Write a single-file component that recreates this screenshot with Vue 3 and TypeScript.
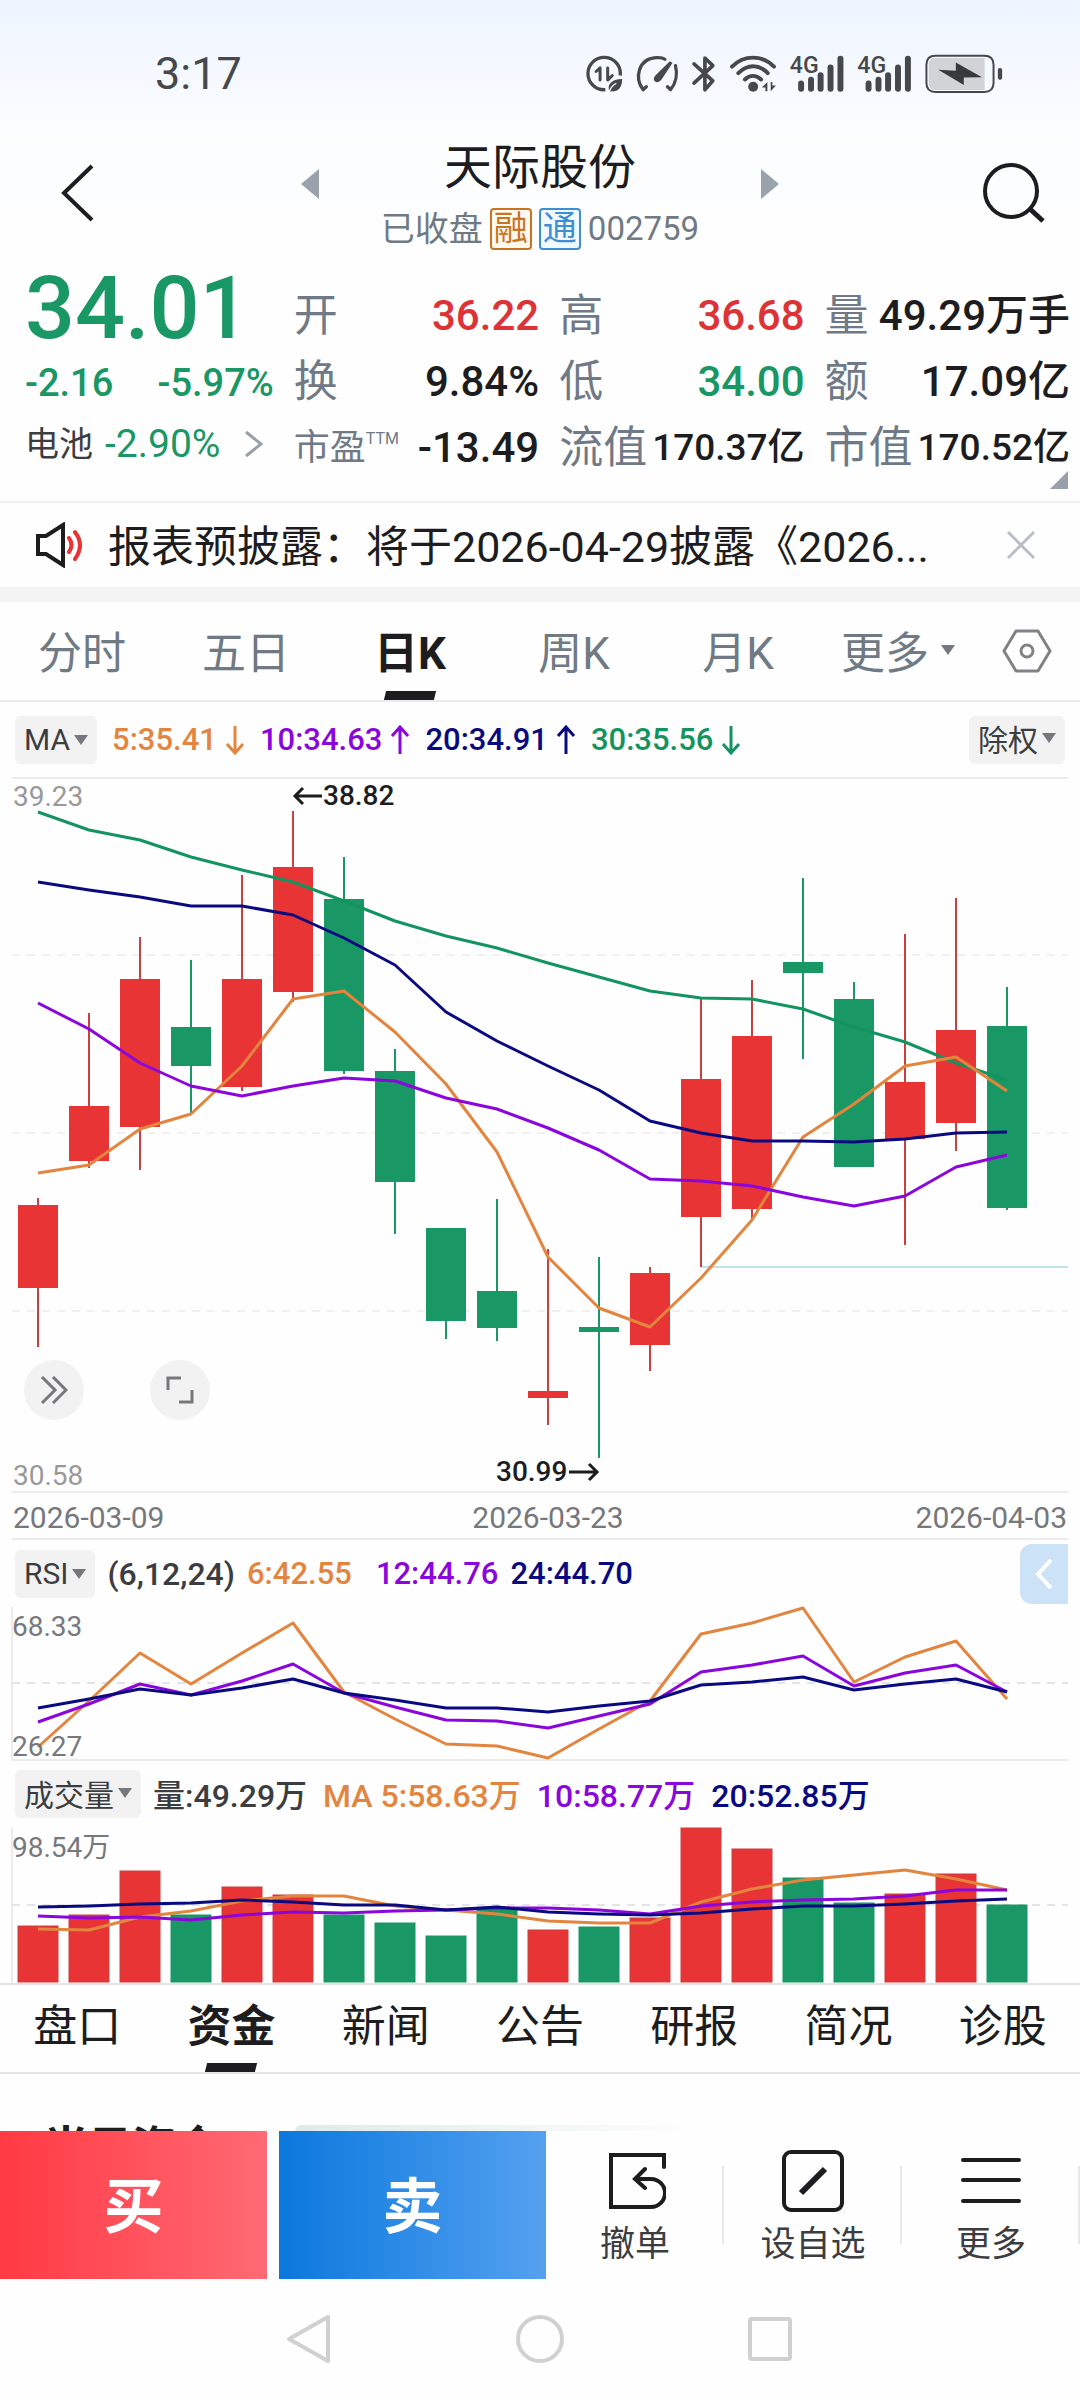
<script setup lang="ts">
import { ref } from 'vue'

interface Candle {
  up: boolean
  high: number
  top: number
  bottom: number
  low: number
}

interface Stat {
  label: string
  note?: string
  value: string
  tone?: string
  compact?: boolean
}

const stats: Stat[] = [
  { label: '开', value: '36.22', tone: 'up' },
  { label: '高', value: '36.68', tone: 'up' },
  { label: '量', value: '49.29万手' },
  { label: '换', value: '9.84%' },
  { label: '低', value: '34.00', tone: 'down' },
  { label: '额', value: '17.09亿' },
  { label: '市盈', note: 'TTM', value: '-13.49' },
  { label: '流值', value: '170.37亿', compact: true },
  { label: '市值', value: '170.52亿', compact: true },
]

const periods = ['分时', '五日', '日K', '周K', '月K']
const activePeriod = ref('日K')

const sections = ['盘口', '资金', '新闻', '公告', '研报', '简况', '诊股']
const activeSection = ref('资金')

const step = 51
const firstX = 38
const x = (i: number): number => firstX + i * step

const rows: [number, number, number, number, number][] = [
  [1, 418, 425, 508, 567],
  [1, 233, 326, 381, 388],
  [1, 157, 199, 347, 390],
  [0, 180, 247, 286, 333],
  [1, 95, 199, 307, 311],
  [1, 31, 87, 212, 222],
  [0, 77, 119, 291, 294],
  [0, 269, 291, 402, 454],
  [0, 448, 448, 541, 559],
  [0, 419, 511, 548, 561],
  [1, 469, 611, 618, 645],
  [0, 477, 547, 552, 678],
  [1, 487, 493, 565, 591],
  [1, 218, 299, 437, 487],
  [1, 200, 256, 429, 439],
  [0, 98, 182, 193, 279],
  [0, 202, 219, 387, 387],
  [1, 154, 302, 359, 465],
  [1, 118, 250, 343, 371],
  [0, 207, 246, 428, 430],
]
const candles: Candle[] = rows.map(([up, high, top, bottom, low]) => ({
  up: up === 1,
  high,
  top,
  bottom,
  low,
}))

const line = (ys: number[]): string => ys.map((y, i) => `${x(i)},${y}`).join(' ')

const priceLines = [
  { tone: 'ma30', points: line([32, 50, 60, 77, 90, 102, 121, 141, 156, 168, 183, 197, 211, 218, 219, 229, 247, 262, 283, 300]) },
  { tone: 'ma5', points: line([393, 385, 349, 334, 286, 219, 211, 252, 304, 372, 477, 528, 547, 498, 440, 357, 324, 286, 277, 311]) },
  { tone: 'ma10', points: line([223, 249, 283, 306, 316, 306, 298, 301, 318, 329, 348, 370, 399, 401, 406, 417, 426, 416, 387, 375]) },
  { tone: 'ma20', points: line([102, 110, 117, 126, 126, 135, 158, 185, 232, 261, 286, 310, 341, 353, 361, 361, 362, 359, 353, 352]) },
]

const rsiLines = [
  { tone: 'ma5', points: line([140, 94, 46, 77, 46, 16, 85, 112, 137, 139, 151, 122, 94, 27, 16, 1, 75, 50, 34, 92]) },
  { tone: 'ma10', points: line([115, 97, 77, 88, 74, 57, 86, 100, 113, 114, 121, 109, 97, 65, 58, 49, 79, 66, 58, 85]) },
  { tone: 'ma20', points: line([101, 92, 82, 88, 81, 72, 86, 93, 101, 101, 105, 99, 94, 78, 75, 70, 83, 77, 72, 85]) },
]

const volumeTops = [99, 88, 44, 88, 60, 68, 88, 96, 109, 82, 103, 100, 91, 1, 22, 51, 76, 67, 47, 78]
const volumeLines = [
  { tone: 'ma5', points: line([102, 103, 90, 84, 74, 69, 69, 79, 83, 87, 94, 96, 96, 75, 62, 53, 48, 43, 52, 63]) },
  { tone: 'ma10', points: line([89, 91, 90, 93, 88, 85, 86, 84, 83, 81, 81, 83, 87, 79, 75, 73, 72, 69, 63, 63]) },
  { tone: 'ma20', points: line([80, 79, 77, 76, 73, 75, 78, 78, 83, 80, 85, 87, 88, 86, 82, 79, 79, 77, 74, 72]) },
]

const averages = [
  { tone: 'ma5', text: '5:35.41', rising: false },
  { tone: 'ma10', text: '10:34.63', rising: true },
  { tone: 'ma20', text: '20:34.91', rising: true },
  { tone: 'ma30', text: '30:35.56', rising: false },
]
</script>

<template>
  <div class="app">
    <div class="top">
      <div class="status">
        <time class="clock">3:17</time>
        <svg class="status-icons" viewBox="78 66 1262 124" aria-hidden="true">
          <g fill="none" stroke="#47484b" stroke-width="10" stroke-linecap="round" stroke-linejoin="round">
            <path d="M137 177A49 49 0 1 1 182 134" stroke-linecap="butt" />
            <path d="M109 122L121 111V148M144 111V148L158 134" stroke-width="9" />
            <path d="M251 177L261 168M251 176C225 143 235 84 290 80C305 79 313 82 317 85" />
            <path d="M349 104C356 130 350 158 334 177L325 168" />
            <path d="M405 99L462 150L438 177V81L462 104L405 157" stroke-width="11" />
            <path d="M520 107C557 71 611 71 647 107M539 127C567 99 601 99 628 127M559 146C574 132 592 132 608 146" stroke-width="12" />
            <path d="M1135 74H1283Q1311 74 1311 101V157Q1311 184 1283 184H1135Q1108 184 1108 157V101Q1108 74 1135 74Z" stroke-width="6" />
          </g>
          <path d="M1134 81H1284V178H1134Q1115 178 1115 157V101Q1115 81 1134 81Z" fill="#d1d3d6" />
          <g fill="#47484b">
            <path d="M150 183C140 164 155 145 188 145C187 172 176 184 157 182L150 183Z" />
            <path d="M148 187C151 174 158 164 170 158" stroke="#f4f7ff" stroke-width="4" fill="none" />
            <path d="M332 91L340 96L306 148Q295 160 285 150Q280 140 292 130Z" />
            <circle cx="584" cy="168" r="15" />
            <path d="M610 170L627 154V182H621V170ZM637 154H642V164H653L637 182Z" />
            <path d="M1144 117L1197 120V95L1276 139L1221 140V163Z" fill="#38393b" />
            <rect x="1324" y="111" width="13" height="36" rx="6" />
            <g v-for="dx in [0, 204]" :key="dx" :transform="`translate(${dx} 0)`">
              <rect x="720" y="149" width="18" height="34" rx="9" />
              <rect x="750" y="138" width="18" height="45" rx="9" />
              <rect x="779" y="124" width="18" height="59" rx="9" />
              <rect x="809" y="101" width="18" height="82" rx="9" />
              <rect x="839" y="74" width="18" height="109" rx="9" />
              <text x="695" y="128" class="net">4G</text>
            </g>
          </g>
        </svg>
      </div>

      <header class="header">
        <button class="back" aria-label="返回">
          <svg width="34" height="58" viewBox="0 0 34 58"><path d="M31 2L3 29L31 56" fill="none" stroke="#1d1d1f" stroke-width="4" /></svg>
        </button>
        <div class="title-row">
          <button class="step" aria-label="上一只">
            <svg width="18" height="30" viewBox="0 0 18 30"><path d="M18 0V30L0 15Z" fill="#9aa3ab" /></svg>
          </button>
          <div class="title">
            <h1>天际股份</h1>
            <p class="subtitle">
              <span>已收盘</span>
              <span class="badge badge-margin">融</span>
              <span class="badge badge-connect">通</span>
              <span class="code">002759</span>
            </p>
          </div>
          <button class="step" aria-label="下一只">
            <svg width="18" height="30" viewBox="0 0 18 30"><path d="M0 0V30L18 15Z" fill="#9aa3ab" /></svg>
          </button>
        </div>
        <button class="search" aria-label="搜索">
          <svg width="64" height="62" viewBox="0 0 64 62" fill="none" stroke="#1d1d1f" stroke-width="4"><circle cx="29" cy="29" r="26" /><path d="M48 47L61 59" stroke-width="5" /></svg>
        </button>
      </header>
    </div>

    <section class="quote">
      <div class="quote-main">
        <strong class="price down">34.01</strong>
        <p class="change down"><span>-2.16</span><span>-5.97%</span></p>
        <a href="#sector" class="sector">
          <span>电池</span>
          <span class="sector-pct down">-2.90%</span>
          <svg width="20" height="28" viewBox="0 0 20 28"><path d="M2 2L17 14L2 26" fill="none" stroke="#9aa0a8" stroke-width="3" /></svg>
        </a>
      </div>
      <dl class="stats">
        <div v-for="s in stats" :key="s.label" class="stat">
          <dt :class="{ small: s.note }">{{ s.label }}<sup v-if="s.note">{{ s.note }}</sup></dt>
          <dd :class="[s.tone, { compact: s.compact }]">{{ s.value }}</dd>
        </div>
      </dl>
      <svg class="corner" width="18" height="18" viewBox="0 0 18 18"><path d="M18 0V18H0Z" fill="#9aa0ab" /></svg>
    </section>

    <section class="notice">
      <svg width="50" height="46" viewBox="0 0 50 46" fill="none" stroke-width="4">
        <path d="M3 14H11L28 3V43L11 32H3Z" stroke="#1d1d1f" />
        <path d="M34 16Q39 23 34 30M40 10Q50 23 40 37" stroke="#e83434" stroke-linecap="round" />
      </svg>
      <p>报表预披露：将于2026-04-29披露《2026...</p>
      <button class="close" aria-label="关闭">
        <svg width="28" height="28" viewBox="0 0 28 28"><path d="M1 1L27 27M27 1L1 27" stroke="#b9bec6" stroke-width="3" /></svg>
      </button>
    </section>

    <nav class="periods">
      <button v-for="p in periods" :key="p" class="period" :class="{ active: p === activePeriod }" @click="activePeriod = p">{{ p }}</button>
      <button class="period more">更多<span class="caret"></span></button>
      <button class="settings" aria-label="设置">
        <svg width="50" height="44" viewBox="0 0 50 44" fill="none" stroke="#808285" stroke-width="3"><path d="M14 2H36L48 22L36 42H14L2 22Z" stroke-linejoin="round" /><circle cx="25" cy="22" r="6" /></svg>
      </button>
    </nav>

    <section class="indicator ma-row">
      <button class="chip">MA<span class="caret"></span></button>
      <span v-for="a in averages" :key="a.text" class="avg" :class="a.tone">
        {{ a.text }}
        <svg width="20" height="30" viewBox="0 0 20 30" fill="none" stroke="currentColor" stroke-width="3">
          <path v-if="a.rising" d="M10 29V2M2 11L10 2L18 11" />
          <path v-else d="M10 1V28M2 19L10 28L18 19" />
        </svg>
      </span>
      <button class="chip cjk adjust">除权<span class="caret"></span></button>
    </section>

    <section class="chart-wrap">
      <svg class="chart" viewBox="0 -3 1080 763">
        <path class="rule" d="M12 -2H1068M12 712H1068M12 759H1068" />
        <path class="grid" d="M12 175H1068M12 353H1068M12 531H1068" />
        <path d="M701 487H1068" stroke="#bfe3ea" stroke-width="2" />
        <text class="axis" x="13" y="26">39.23</text>
        <text class="axis" x="13" y="705">30.58</text>
        <g v-for="(c, i) in candles" :key="i" :class="c.up ? 'candle-up' : 'candle-down'">
          <path :d="`M${x(i)} ${c.high}V${c.low}`" stroke-width="2" />
          <rect :x="x(i) - 20" :y="c.top" width="40" :height="c.bottom - c.top" stroke="none" />
        </g>
        <polyline v-for="l in priceLines" :key="l.tone" class="trace" :class="l.tone" :points="l.points" />
        <g class="mark">
          <path d="M322 16H295M303 8L295 16L303 24" />
          <text x="323" y="25">38.82</text>
          <text x="496" y="701">30.99</text>
          <path d="M569 692H597M589 684L597 692L589 700" />
        </g>
        <g class="date">
          <text x="13" y="748">2026-03-09</text>
          <text x="548" y="748" text-anchor="middle">2026-03-23</text>
          <text x="1067" y="748" text-anchor="end">2026-04-03</text>
        </g>
      </svg>
      <div class="tools">
        <button class="round" aria-label="展开">
          <svg width="28" height="28" viewBox="0 0 28 28"><path d="M2 1L15 14L2 27M13 1L26 14L13 27" /></svg>
        </button>
        <button class="round" aria-label="全屏">
          <svg width="28" height="28" viewBox="0 0 28 28"><path d="M2 14V2H15M26 14V26H13" /></svg>
        </button>
      </div>
    </section>

    <section class="indicator rsi-row">
      <button class="chip">RSI<span class="caret"></span></button>
      <span class="plain">(6,12,24)</span>
      <span class="ma5">6:42.55</span>
      <span class="ma10">12:44.76</span>
      <span class="ma20">24:44.70</span>
      <button class="drawer" aria-label="展开指标">
        <svg width="18" height="30" viewBox="0 0 18 30"><path d="M16 1L3 15L16 29" fill="none" stroke="#fff" stroke-width="4" /></svg>
      </button>
    </section>
    <svg class="chart" viewBox="0 0 1080 154">
      <path class="rule" d="M12 153H1068M12 0V153" />
      <path class="grid strong" d="M12 76H1068" />
      <polyline v-for="l in rsiLines" :key="l.tone" class="trace" :class="l.tone" :points="l.points" />
      <text class="axis dark" x="12" y="29">68.33</text>
      <text class="axis dark" x="12" y="149">26.27</text>
    </svg>

    <section class="indicator vol-row">
      <button class="chip cjk">成交量<span class="caret"></span></button>
      <span class="plain">量:49.29万</span>
      <span class="ma5">MA 5:58.63万</span>
      <span class="ma10">10:58.77万</span>
      <span class="ma20">20:52.85万</span>
    </section>
    <svg class="chart" viewBox="0 0 1080 156">
      <path class="rule" d="M12 0V156" />
      <path class="grid strong" d="M12 78H1068" />
      <text class="axis dark" x="12" y="30">98.54万</text>
      <rect
        v-for="(t, i) in volumeTops"
        :key="i"
        :class="candles[i].up ? 'candle-up' : 'candle-down'"
        :x="x(i) - 20"
        :y="t"
        width="40"
        :height="155 - t"
        stroke="none"
      />
      <polyline v-for="l in volumeLines" :key="l.tone" class="trace" :class="l.tone" :points="l.points" />
    </svg>

    <nav class="sections">
      <button v-for="s in sections" :key="s" class="section-tab" :class="{ active: s === activeSection }" @click="activeSection = s">{{ s }}</button>
    </nav>

    <section class="funds">
      <h2>当日资金</h2>
      <div class="banner"></div>
    </section>

    <footer class="actions">
      <button class="trade buy">买</button>
      <button class="trade sell">卖</button>
      <button class="action">
        <svg width="62" height="62" viewBox="0 0 62 62" fill="none" stroke="#1d1d1f" stroke-width="4" stroke-linecap="round"><path d="M60 17V5H7V57H47A14 14 0 0 0 47 29H32M41 19L31 29L41 38" /></svg>
        <span>撤单</span>
      </button>
      <button class="action">
        <svg width="62" height="62" viewBox="0 0 62 62" fill="none" stroke="#1d1d1f"><rect x="2" y="2" width="58" height="58" rx="7" stroke-width="4" /><path d="M19 43L43 19" stroke-width="6" /></svg>
        <span>设自选</span>
      </button>
      <button class="action">
        <svg width="62" height="62" viewBox="0 0 62 62" fill="none" stroke="#1d1d1f" stroke-width="4" stroke-linecap="round"><path d="M3 10H59M3 30H59M3 51H59" /></svg>
        <span>更多</span>
      </button>
    </footer>

    <nav class="system">
      <button aria-label="后退"><svg width="52" height="52" viewBox="0 0 52 52"><path d="M44 4V48L5 26Z" /></svg></button>
      <button aria-label="主页"><svg width="52" height="52" viewBox="0 0 52 52"><circle cx="26" cy="26" r="22" /></svg></button>
      <button aria-label="最近任务"><svg width="52" height="52" viewBox="0 0 52 52"><rect x="6" y="6" width="40" height="40" rx="2" /></svg></button>
    </nav>
  </div>
</template>

<style>
body {
  background: #fefefe;
}
</style>

<style scoped>
.app {
  font-family: Roboto, "Noto Sans CJK SC", sans-serif;
  color: #1d1d1f;
  background: #fefefe;
  overflow: hidden;
}

button {
  font: inherit;
  color: inherit;
  background: none;
  border: 0;
  padding: 0;
  margin: 0;
  cursor: pointer;
}

h1,
h2,
p,
dl,
dd {
  margin: 0;
}

svg {
  display: block;
  flex: none;
}

.up {
  color: #dd3337;
}

.down {
  color: #199764;
}

.top {
  background: linear-gradient(#eef4ff, #fbfdff 55%, #fefefe);
}

.status {
  display: flex;
  justify-content: space-between;
  align-items: center;
  height: 134px;
  padding: 6px 75px 0 155px;
}

.clock {
  font-size: 45px;
  color: #47484b;
}

.status-icons {
  width: 421px;
  height: 41px;
}

.net {
  font-size: 70px;
  font-weight: 500;
}

.header {
  display: grid;
  grid-template-columns: 1fr 478px 1fr;
  align-items: center;
  height: 110px;
}

.back {
  justify-self: start;
  margin: 0 0 4px 61px;
}

.search {
  justify-self: end;
  margin: 0 34px 4px 0;
}

.title-row {
  display: flex;
  justify-content: space-between;
  align-items: center;
}

.step {
  padding-bottom: 22px;
}

.title {
  text-align: center;
}

h1 {
  font-size: 48px;
  font-weight: 400;
  line-height: 54px;
}

.subtitle {
  display: flex;
  align-items: center;
  justify-content: center;
  gap: 7px;
  margin-top: 13px;
  font-size: 34px;
  line-height: 42px;
  color: #6f7a84;
}

.code {
  font-size: 33px;
}

.badge {
  box-sizing: border-box;
  width: 42px;
  height: 42px;
  border: 2px solid;
  border-radius: 4px;
  line-height: 36px;
  text-align: center;
}

.badge-margin {
  color: #c97420;
  background: #fff9f0;
}

.badge-connect {
  color: #3e8ed4;
  background: #f1f9ff;
}

.quote {
  position: relative;
  display: grid;
  grid-template-columns: 249fr 777fr;
  gap: 20px;
  padding: 16px 10px 20px 25px;
  border-bottom: 2px solid #f0f0f0;
}

.price {
  display: block;
  font-size: 88px;
  font-weight: 500;
  line-height: 84px;
}

.change {
  display: flex;
  justify-content: space-between;
  font-size: 38px;
  font-weight: 500;
  line-height: 66px;
}

.sector {
  display: flex;
  align-items: center;
  gap: 12px;
  font-size: 34px;
  line-height: 56px;
  color: #3c3d40;
  text-decoration: none;
}

.sector-pct {
  font-size: 39px;
  margin-right: 12px;
}

.stats {
  display: grid;
  grid-template-columns: repeat(3, 1fr);
  column-gap: 20px;
  padding-top: 17px;
}

.stat {
  display: flex;
  justify-content: space-between;
  align-items: center;
  line-height: 66px;
  white-space: nowrap;
}

dt {
  font-size: 44px;
  color: #6f7a86;
}

dt.small {
  font-size: 36px;
}

sup {
  font-size: 16px;
  line-height: 16px;
  vertical-align: 16px;
}

dd {
  font-size: 42px;
  font-weight: 500;
}

dd.compact {
  font-size: 37px;
}

.corner {
  position: absolute;
  right: 12px;
  bottom: 12px;
}

.notice {
  display: flex;
  align-items: center;
  height: 84px;
  padding: 0 45px 0 35px;
  border-bottom: 15px solid #f4f4f4;
}

.notice p {
  flex: 1;
  margin-left: 23px;
  padding-bottom: 4px;
  font-size: 43px;
  white-space: nowrap;
  overflow: hidden;
}

.periods {
  display: flex;
  align-items: center;
  height: 98px;
  border-bottom: 2px solid #ececec;
}

.period {
  position: relative;
  flex: 164 1 0;
  height: 98px;
  padding-bottom: 3px;
  font-size: 44px;
  color: #6f7a84;
}

.period.more {
  display: flex;
  flex-grow: 156;
  align-items: center;
  justify-content: center;
  gap: 12px;
}

.settings {
  flex: 104 1 0;
}

.settings svg {
  margin-left: 26px;
}

.period.active,
.section-tab.active {
  font-weight: 700;
  color: #1d1d1f;
}

.active::after {
  content: "";
  position: absolute;
  bottom: 0;
  left: 50%;
  width: 50px;
  height: 9px;
  margin-left: -25px;
  background: #1d1d1f;
  transform: skewX(-14deg);
}

.caret {
  border: 7px solid transparent;
  border-top: 10px solid #75787c;
  border-bottom: 0;
}

.indicator {
  display: flex;
  align-items: center;
  padding: 0 15px;
  font-size: 31px;
  font-weight: 500;
  white-space: nowrap;
}

.chip {
  box-sizing: border-box;
  display: flex;
  align-items: center;
  gap: 4px;
  height: 48px;
  padding: 0 9px;
  border-radius: 6px;
  background: #f2f2f2;
  color: #3c3d40;
  font-size: 30px;
  font-weight: 400;
}

.chip.cjk {
  padding-bottom: 3px;
}

.plain {
  color: #3c3d40;
}

.ma-row {
  height: 75px;
  gap: 15px;
}

.avg {
  display: flex;
  align-items: center;
  gap: 8px;
}

.adjust {
  margin-left: auto;
}

.ma5 {
  color: #e3853e;
  stroke: #e3853e;
}

.ma10 {
  color: #8a06dc;
  stroke: #8a06dc;
}

.ma20 {
  color: #0a0a80;
  stroke: #0a0a80;
}

.ma30 {
  color: #13945f;
  stroke: #13945f;
}

.chart-wrap {
  position: relative;
}

.chart {
  width: 100%;
  height: auto;
  overflow: visible;
}

.trace {
  fill: none;
  stroke-width: 3;
  stroke-linejoin: round;
}

.rule {
  fill: none;
  stroke: #ececec;
  stroke-width: 2;
}

.grid {
  fill: none;
  stroke: #f0f0f0;
  stroke-width: 2;
  stroke-dasharray: 8 7;
}

.grid.strong {
  stroke: #e4e4e8;
}

.candle-up {
  fill: #e83434;
  stroke: #c8403f;
}

.candle-down {
  fill: #199764;
  stroke: #199764;
}

.axis {
  font-size: 28px;
  fill: #999;
}

.axis.dark {
  fill: #77787b;
}

.mark text {
  font-size: 28px;
  font-weight: 500;
  fill: #1d1d1f;
}

.mark path {
  fill: none;
  stroke: #1d1d1f;
  stroke-width: 3;
}

.date text {
  font-size: 30px;
  fill: #77787b;
}

.tools {
  position: absolute;
  left: 24px;
  bottom: 120px;
  display: flex;
  gap: 66px;
}

.round {
  display: flex;
  align-items: center;
  justify-content: center;
  width: 60px;
  height: 60px;
  border-radius: 50%;
  background: #f2f2f2;
}

.round path {
  fill: none;
  stroke: #77787b;
  stroke-width: 3;
}

.rsi-row {
  height: 67px;
  padding-right: 12px;
  gap: 12px;
}

.rsi-row .plain {
  font-size: 32px;
}

.rsi-row .ma10 {
  margin-left: 12px;
}

.drawer {
  display: flex;
  align-items: center;
  justify-content: center;
  width: 48px;
  height: 60px;
  margin-left: auto;
  border-radius: 12px 0 0 12px;
  background: #cce2f6;
}

.vol-row {
  height: 66px;
  gap: 16px;
  font-size: 32px;
}

.vol-row span {
  padding-bottom: 3px;
}

.vol-row .caret {
  padding-bottom: 0;
}

.vol-row .plain {
  margin-left: -4px;
}

.sections {
  display: flex;
  border-top: 2px solid #e4e4e4;
  border-bottom: 2px solid #e4e4e4;
}

.section-tab {
  position: relative;
  flex: 1 1 0;
  height: 87px;
  padding-bottom: 11px;
  font-size: 44px;
}

.funds {
  display: flex;
  gap: 75px;
  height: 57px;
  padding-left: 44px;
  overflow: hidden;
}

h2 {
  margin-top: 44px;
  font-size: 44px;
  line-height: 60px;
  white-space: nowrap;
}

.banner {
  flex: none;
  width: 400px;
  height: 60px;
  margin-top: 51px;
  border-radius: 6px 0 0 0;
  background: linear-gradient(90deg, #dcebea, #fefefe);
}

.actions {
  display: flex;
  height: 148px;
}

.trade {
  flex: 267 1 0;
  margin-right: 12px;
  padding-bottom: 8px;
  font-size: 60px;
  font-weight: 700;
  color: #fff;
}

.buy {
  background: linear-gradient(90deg, #ff3a44, #ff6a74);
}

.sell {
  margin-right: 0;
  background: linear-gradient(90deg, #0a78dd, #55a1f0);
}

.action {
  position: relative;
  display: flex;
  flex: 178 1 0;
  flex-direction: column;
  align-items: center;
  gap: 11px;
  padding-top: 19px;
  font-size: 35px;
  line-height: 44px;
  color: #3c3d40;
}

.action::after {
  content: "";
  position: absolute;
  right: 0;
  top: 35px;
  width: 2px;
  height: 78px;
  background: #e8e8e8;
}

.system {
  display: flex;
  justify-content: center;
  align-items: center;
  gap: 178px;
  height: 120px;
}

.system path,
.system circle,
.system rect {
  fill: none;
  stroke: #d0d0d0;
  stroke-width: 4;
  stroke-linejoin: round;
}
</style>
